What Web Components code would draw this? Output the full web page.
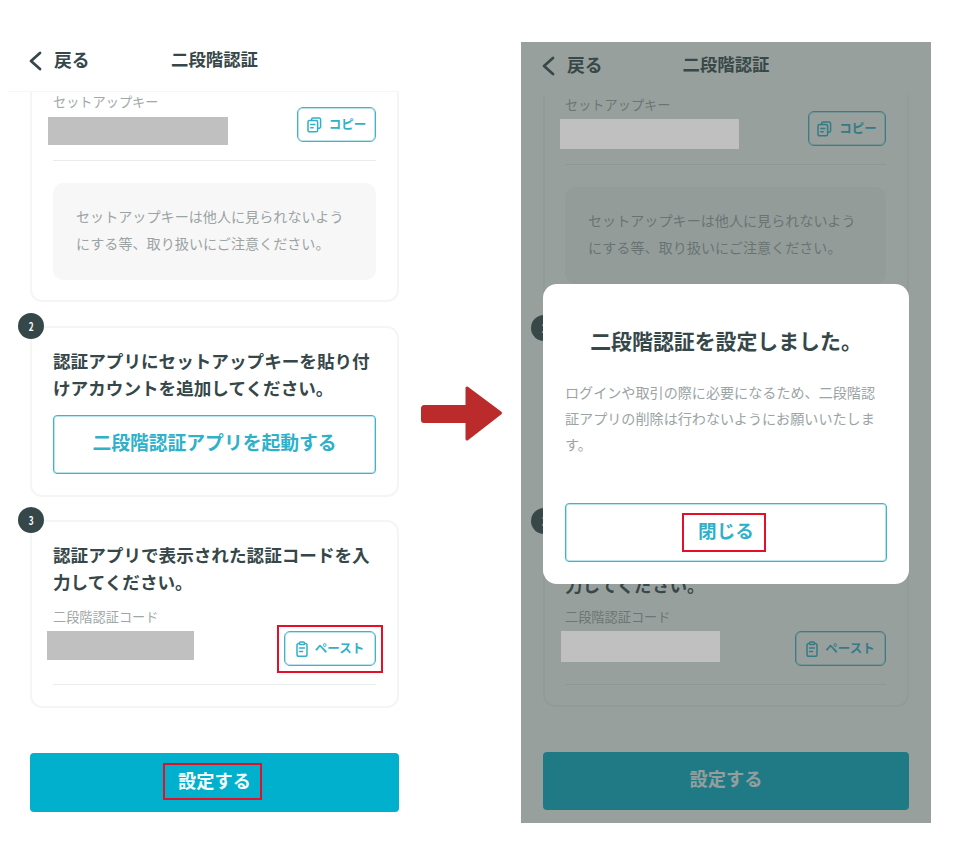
<!DOCTYPE html>
<html lang="ja">
<head>
<meta charset="utf-8">
<title>二段階認証</title>
<style>
  html, body { margin: 0; background: #fff; }
  body {
    width: 954px;
    height: 845px;
    overflow: hidden;
    display: flex;
    align-items: flex-start;
    font-family: "Noto Sans CJK JP", "Noto Sans", sans-serif;
    color: #36474a;
  }
</style>
</head>
<body>

<phone-screen>
  <app-header></app-header>
  <step-card cut style="--pt:0px;--pb:20px">
    <key-field label="セットアップキー" style="--gap:5px;--block-w:180px;--block-h:28px;--block-x:-5px;--btn-top:15px">
      <small-button kind="copy" style="--btn-w:79px">コピー</small-button>
    </key-field>
    <note-box>セットアップキーは他人に見られないようにする等、取り扱いにご注意ください。</note-box>
  </step-card>
  <step-card num="2" style="--mt:24px;--pt:19px;--pb:21px">
    <step-title>認証アプリにセットアップキーを貼り付けアカウントを追加してください。</step-title>
    <outline-button style="--btn-mt:14px;--btn-font:18.8px">二段階認証アプリを起動する</outline-button>
  </step-card>
  <step-card num="3" style="--mt:23px;--pt:19px;--pb:21px">
    <step-title>認証アプリで表示された認証コードを入力してください。</step-title>
    <key-field label="二段階認証コード" style="--field-mt:12px;--gap:4px;--block-w:147px;--block-h:29px;--block-x:-6px;--btn-top:24px">
      <small-button kind="paste" marked style="--btn-w:92px">ペースト</small-button>
    </key-field>
  </step-card>
  <primary-button marked style="--btn-h:59px">設定する</primary-button>
</phone-screen>

<flow-arrow></flow-arrow>

<phone-screen dim>
  <app-header></app-header>
  <step-card cut style="--pt:0px;--pb:18px">
    <key-field label="セットアップキー" style="--gap:4px;--block-w:179px;--block-h:30px;--block-x:-5px;--btn-top:16px">
      <small-button kind="copy" style="--btn-w:78px">コピー</small-button>
    </key-field>
    <note-box>セットアップキーは他人に見られないようにする等、取り扱いにご注意ください。</note-box>
  </step-card>
  <!-- this card sits completely behind the dialog, only its number peeks out -->
  <step-card num="2" style="--mt:24px;--pt:0px;--pb:0px;--card-h:169px"></step-card>
  <step-card num="3" style="--mt:24px;--pt:21px;--pb:20px">
    <step-title>認証アプリで表示された認証コードを入力してください。</step-title>
    <key-field label="二段階認証コード" style="--field-mt:9px;--gap:4px;--block-w:159px;--block-h:31px;--block-x:-4px;--btn-top:24px">
      <small-button kind="paste" style="--btn-w:91px">ペースト</small-button>
    </key-field>
  </step-card>
  <primary-button style="--btn-h:58px">設定する</primary-button>
  <confirm-modal slot="over" heading="二段階認証を設定しました。">
    ログインや取引の際に必要になるため、二段階認証アプリの削除は行わないようにお願いいたします。
  </confirm-modal>
</phone-screen>

<script>
class PhoneScreen extends HTMLElement {
  constructor() {
    super();
    this.attachShadow({ mode: 'open' });
  }

  connectedCallback() {
    this.shadowRoot.innerHTML = `
      <style>
        :host {
          display: block;
          flex: none;
          box-sizing: border-box;
          width: 420px;
          height: 845px;
          padding: 0 21px 0 30px;
          background: #fff;
          --inner-l: 21px;
          --inner-r: 21px;
          --header-h: 92px;
          --header-top: 46px;
          --header-line: #f5f6f6;
          --header-bleed: 22px;
        }
        :host([dim]) {
          position: relative;
          overflow: hidden;
          width: 410px;
          height: 781px;
          margin-top: 42px;
          padding: 0 22px;
          --inner-l: 20px;
          --inner-r: 21px;
          --header-h: 53px;
          --header-top: 9px;
          --header-line: transparent;
          --header-bleed: 0px;
        }
        .shade {
          display: none;
        }
        :host([dim]) .shade {
          display: block;
          position: absolute;
          inset: 0;
          z-index: 1;
          background: rgba(59, 74, 70, .525);
        }
      </style>
      <slot></slot>
      <div class="shade"></div>
      <slot name="over"></slot>
    `;
  }
}

class AppHeader extends HTMLElement {
  constructor() {
    super();
    this.attachShadow({ mode: 'open' });
  }

  connectedCallback() {
    this.shadowRoot.innerHTML = `
      <style>
        :host {
          display: grid;
          grid-template-columns: 1fr auto 1fr;
          align-items: start;
          box-sizing: border-box;
          height: var(--header-h);
          margin: 0 0 0 calc(0px - var(--header-bleed));
          padding: var(--header-top) 0 0 var(--header-bleed);
          border-bottom: 1px solid var(--header-line);
          font-size: 17.4px;
          font-weight: 700;
          line-height: 26px;
          color: #36474a;
        }
        .back { display: flex; align-items: center; gap: 12px; margin-left: -2px; }
        .back span { font-size: 17.8px; }
        svg { display: block; width: 14px; height: 20px; margin-top: 4px; }
      </style>
      <div class="back">
        <svg viewBox="0 0 14 20" fill="none" stroke="#36474a" stroke-width="2.8" stroke-linecap="round" stroke-linejoin="round"><polyline points="12,2 3,10 12,18"/></svg>
        <span>戻る</span>
      </div>
      <div>二段階認証</div>
      <div></div>
    `;
  }
}

class StepCard extends HTMLElement {
  constructor() {
    super();
    this.attachShadow({ mode: 'open' });
  }

  connectedCallback() {
    const num = this.getAttribute('num');
    this.shadowRoot.innerHTML = `
      <style>
        :host {
          display: block;
          position: relative;
          box-sizing: border-box;
          height: var(--card-h, auto);
          margin-top: var(--mt, 0);
          padding: var(--pt) var(--inner-r) var(--pb) var(--inner-l);
          background: #fff;
          border: 2px solid #f4f5f5;
          border-radius: 12px;
        }
        :host([cut]) {
          border-top: none;
          border-radius: 0 0 12px 12px;
        }
        .num {
          position: absolute;
          left: -14px;
          top: -15px;
          width: 26px;
          height: 26px;
          border-radius: 50%;
          background: #36474a;
          color: #fff;
          font-size: 11px;
          font-weight: 700;
          line-height: 26px;
          text-align: center;
        }
        .num span { display: inline-block; transform: scaleX(.75); }
      </style>
      ${num ? `<div class="num"><span>${num}</span></div>` : ''}
      <slot></slot>
    `;
  }
}

class StepTitle extends HTMLElement {
  constructor() {
    super();
    this.attachShadow({ mode: 'open' });
  }

  connectedCallback() {
    this.shadowRoot.innerHTML = `
      <style>
        :host {
          display: block;
          font-size: 17.6px;
          font-weight: 700;
          line-height: 27px;
          color: #36474a;
        }
      </style>
      <slot></slot>
    `;
  }
}

class KeyField extends HTMLElement {
  constructor() {
    super();
    this.attachShadow({ mode: 'open' });
  }

  connectedCallback() {
    this.shadowRoot.innerHTML = `
      <style>
        :host {
          display: block;
          margin-top: var(--field-mt, 0);
        }
        .row {
          display: flex;
          justify-content: space-between;
          align-items: flex-start;
        }
        .label {
          font-size: 13.2px;
          line-height: 20px;
          color: #a0a7a7;
        }
        .block {
          position: relative;
          z-index: 2;
          width: var(--block-w);
          height: var(--block-h);
          margin: var(--gap) 0 -20px var(--block-x);
          background: #c0c0c0;
        }
        .action { margin-top: var(--btn-top); }
        .line {
          height: 1px;
          margin-top: 18px;
          background: #e9ecec;
        }
      </style>
      <div class="row">
        <div>
          <div class="label">${this.getAttribute('label')}</div>
          <div class="block"></div>
        </div>
        <div class="action"><slot></slot></div>
      </div>
      <div class="line"></div>
    `;
  }
}

class SmallButton extends HTMLElement {
  constructor() {
    super();
    this.attachShadow({ mode: 'open' });
  }

  connectedCallback() {
    const icons = {
      copy: `<svg viewBox="0 0 15 16" width="15" height="16" fill="none" stroke="#2fb1ca" stroke-width="1.5" stroke-linejoin="round" stroke-linecap="round">
        <path d="M4.6 3.4V2.4a1.4 1.4 0 0 1 1.4-1.4h6.2a1.4 1.4 0 0 1 1.4 1.4v7.4a1.4 1.4 0 0 1-1.4 1.4h-1"/>
        <rect x="1" y="3.600" width="9.600" height="11.200" rx="1.400"/>
        <path d="M3.800 7.600h4M3.800 10.800h2.400"/></svg>`,
      paste: `<svg viewBox="0 0 12 16" width="12" height="16" fill="none" stroke="#2fb1ca" stroke-width="1.5" stroke-linejoin="round" stroke-linecap="round">
        <rect x="1" y="2.400" width="10" height="12.800" rx="1.800"/>
        <rect x="3.600" y=".9" width="4.800" height="2.600" rx=".8" fill="#fff"/>
        <path d="M3.600 7h4.800M3.600 10.400h3"/></svg>`
    };
    this.shadowRoot.innerHTML = `
      <style>
        :host {
          display: flex;
          position: relative;
          align-items: center;
          justify-content: center;
          gap: 7px;
          box-sizing: border-box;
          width: var(--btn-w);
          height: 35px;
          background: #fff;
          border: 1px solid #3fb3ca;
          box-shadow: inset 0 0 0 1px rgba(63, 179, 202, .35);
          border-radius: 6px;
          color: #2fb1ca;
          font-size: 12.5px;
          font-weight: 700;
          line-height: 16px;
        }
        :host([marked])::after {
          content: "";
          position: absolute;
          inset: -7px -8px -8px -8px;
          border: 2px solid #e60f2a;
        }
        svg { display: block; flex: none; }
        .text { padding-bottom: 2px; }
      </style>
      ${icons[this.getAttribute('kind')]}
      <span class="text"><slot></slot></span>
    `;
  }
}

class NoteBox extends HTMLElement {
  constructor() {
    super();
    this.attachShadow({ mode: 'open' });
  }

  connectedCallback() {
    this.shadowRoot.innerHTML = `
      <style>
        :host {
          display: block;
          box-sizing: border-box;
          height: 97px;
          margin-top: 22px;
          padding: 20px 23px 22px;
          background: #f7f7f7;
          border-radius: 10px;
          color: #9ba3a4;
          font-size: 14.1px;
          line-height: 27px;
        }
      </style>
      <slot></slot>
    `;
  }
}

class OutlineButton extends HTMLElement {
  constructor() {
    super();
    this.attachShadow({ mode: 'open' });
  }

  connectedCallback() {
    this.shadowRoot.innerHTML = `
      <style>
        :host {
          display: flex;
          align-items: center;
          justify-content: center;
          box-sizing: border-box;
          height: 59px;
          margin-top: var(--btn-mt, 0);
          background: #fff;
          border: 1px solid #3fb3ca;
          box-shadow: inset 0 0 0 1px rgba(63, 179, 202, .35);
          border-radius: 4px;
          color: #2fb1ca;
          font-size: var(--btn-font, 18.6px);
          font-weight: 700;
          line-height: 26px;
        }
        .mark { display: block; padding-bottom: 5px; }
        :host([marked]) .mark {
          box-sizing: border-box;
          height: 39px;
          margin-left: -4px;
          padding: 2px 10px 0 14px;
          border: 2px solid #e60f2a;
        }
      </style>
      <span class="mark"><slot></slot></span>
    `;
  }
}

class PrimaryButton extends HTMLElement {
  constructor() {
    super();
    this.attachShadow({ mode: 'open' });
  }

  connectedCallback() {
    this.shadowRoot.innerHTML = `
      <style>
        :host {
          display: flex;
          align-items: center;
          justify-content: center;
          box-sizing: border-box;
          height: var(--btn-h);
          margin-top: 45px;
          padding-bottom: 2px;
          background: #00b0cc;
          border-radius: 4px;
          color: #f4fbfc;
          font-size: 18.2px;
          font-weight: 700;
          line-height: 26px;
        }
        .mark { display: block; padding-bottom: 4px; }
        :host([marked]) .mark {
          box-sizing: border-box;
          height: 37px;
          margin-left: -4px;
          padding: 2px 9px 0 13px;
          border: 2px solid #e60f2a;
        }
      </style>
      <span class="mark"><slot></slot></span>
    `;
  }
}

class ConfirmModal extends HTMLElement {
  constructor() {
    super();
    this.attachShadow({ mode: 'open' });
  }

  connectedCallback() {
    this.shadowRoot.innerHTML = `
      <style>
        :host {
          display: block;
          position: absolute;
          left: 22px;
          top: 242px;
          z-index: 3;
          box-sizing: border-box;
          width: 366px;
          height: 300px;
          padding: 42px 22px 22px;
          background: #fff;
          border-radius: 14px;
        }
        h2 {
          margin: 0;
          font-size: 20.9px;
          font-weight: 700;
          line-height: 28px;
          text-align: center;
          color: #36474a;
        }
        p {
          margin: 25px 0 46px;
          height: 78px;
          font-size: 14.1px;
          line-height: 26px;
          color: #9ba3a4;
        }
      </style>
      <h2>${this.getAttribute('heading')}</h2>
      <p><slot></slot></p>
      <outline-button marked>閉じる</outline-button>
    `;
  }
}

class FlowArrow extends HTMLElement {
  constructor() {
    super();
    this.attachShadow({ mode: 'open' });
  }

  connectedCallback() {
    this.shadowRoot.innerHTML = `
      <style>
        :host {
          display: block;
          flex: none;
          width: 101px;
          padding: 385px 0 0 1px;
          box-sizing: border-box;
        }
        svg { display: block; }
      </style>
      <svg width="82" height="57" viewBox="0 0 82 57" fill="#bb2b2b" stroke="#bb2b2b" stroke-width="3" stroke-linejoin="round">
        <path d="M3 21.500H46V3L79.500 28 46 54V36.500H3a1.500 1.500 0 0 1-1.500-1.500V23a1.500 1.500 0 0 1 1.500-1.500z"/>
      </svg>
    `;
  }
}

customElements.define('phone-screen', PhoneScreen);
customElements.define('app-header', AppHeader);
customElements.define('step-card', StepCard);
customElements.define('step-title', StepTitle);
customElements.define('key-field', KeyField);
customElements.define('small-button', SmallButton);
customElements.define('note-box', NoteBox);
customElements.define('outline-button', OutlineButton);
customElements.define('primary-button', PrimaryButton);
customElements.define('confirm-modal', ConfirmModal);
customElements.define('flow-arrow', FlowArrow);
</script>
</body>
</html>
